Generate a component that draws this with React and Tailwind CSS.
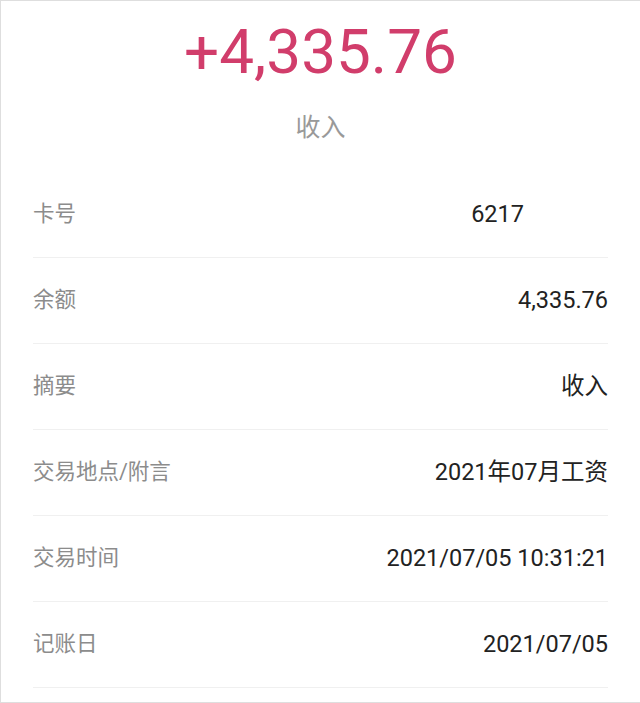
const rows = [
  { label: "卡号", value: "6217", extra: "mr-[84px]" },
  { label: "余额", value: "4,335.76" },
  { label: "摘要", value: "收入" },
  { label: "交易地点/附言", value: "2021年07月工资" },
  { label: "交易时间", value: "2021/07/05 10:31:21" },
  { label: "记账日", value: "2021/07/05" },
];

export default function App() {
  return (
    <div
      className="w-[640px] h-[703px] bg-white border-t border-l border-b border-[#dedede] flex flex-col"
      style={{ fontFamily: "Roboto, 'Noto Sans CJK SC', sans-serif" }}
    >
      <div className="flex flex-col items-center pt-[20px]">
        <div className="text-[62px] leading-none text-[#d13d6b]">+4,335.76</div>
        <div className="mt-[32px] text-[25px] leading-none text-[#999999]">收入</div>
      </div>

      <div className="mt-[32px] mx-[32px] flex flex-col">
        {rows.map((r) => (
          <div
            key={r.label}
            className="h-[86px] flex items-center justify-between border-b border-[#f0f0f0]"
          >
            <span className="text-[21.5px] text-[#8c8c8c]">{r.label}</span>
            <span className={`text-[23.5px] text-[#222222] ${r.extra || ""}`}>{r.value}</span>
          </div>
        ))}
      </div>
    </div>
  );
}
